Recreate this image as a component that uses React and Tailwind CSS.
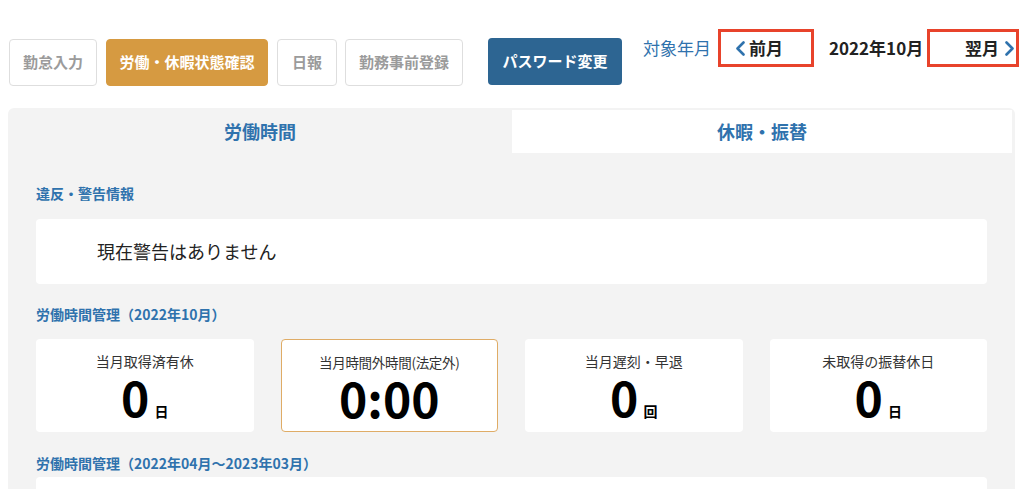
const navButtons = [
  { label: '勤怠入力', w: 'w-[88px]' },
  { label: '労働・休暇状態確認', w: 'w-[162px]', active: true },
  { label: '日報', w: 'w-[60px]' },
  { label: '勤務事前登録', w: 'w-[118px]' },
];

const stats = [
  { label: '当月取得済有休', value: '0', unit: '日' },
  { label: '当月時間外時間(法定外)', value: '0:00', highlight: true },
  { label: '当月遅刻・早退', value: '0', unit: '回' },
  { label: '未取得の振替休日', value: '0', unit: '日' },
];

function Chevron({ dir = 'left', className = '' }) {
  const points = dir === 'left' ? '8.5,1.5 2.5,7.5 8.5,13.5' : '2.5,1.5 8.5,7.5 2.5,13.5';
  return (
    <svg width="11" height="15" viewBox="0 0 11 15" className={className}>
      <polyline points={points} fill="none" stroke="currentColor" strokeWidth="2.6" strokeLinecap="round" strokeLinejoin="round" />
    </svg>
  );
}

function SectionTitle({ children, className = '' }) {
  return (
    <p className={`text-[14px] leading-[20px] font-bold text-[#2f72ad] ${className}`}>{children}</p>
  );
}

export default function App() {
  return (
    <div className="w-[1024px] h-[489px] overflow-hidden bg-white font-['Noto_Sans_CJK_JP',sans-serif]">
      <div className="flex items-start h-[108px] pl-[9px] pt-[29px]">
        <div className="flex mt-[10px]">
          {navButtons.map((b, i) => (
            <button
              key={b.label}
              className={`${b.w} h-[47px] rounded-[4px] border text-[15px] font-bold ${i > 0 ? (i === 3 ? 'ml-[8px]' : 'ml-[9px]') : ''} ${
                b.active
                  ? 'bg-[#d69a41] border-[#d69a41] text-white'
                  : 'bg-white border-[#dedede] text-[#9b9b9b]'
              }`}
            >
              {b.label}
            </button>
          ))}
          <button className="ml-[25px] -mt-[1px] w-[134px] h-[47px] rounded-[4px] bg-[#2d6592] text-white text-[15px] font-bold">
            パスワード変更
          </button>
        </div>

        <div className="flex items-center ml-[21px] h-[38px]">
          <span className="text-[17px] text-[#2f72ad] mr-[7px]">対象年月</span>
          <div className="flex items-center w-[96px] h-[38px] border-[3px] border-[#e8432b] pl-[14px]">
            <Chevron dir="left" className="text-[#2f72ad]" />
            <span className="ml-[3px] text-[17px] font-bold text-[#222]">前月</span>
          </div>
          <span className="ml-[15px] w-[98px] text-[17px] font-bold text-[#222]">2022年10月</span>
          <div className="flex items-center justify-end w-[92px] h-[38px] border-[3px] border-[#e8432b] pr-[1px]">
            <span className="text-[17px] font-bold text-[#222]">翌月</span>
            <Chevron dir="right" className="ml-[5px] text-[#2f72ad]" />
          </div>
        </div>
      </div>

      <div className="ml-[8px] w-[1007px] h-[400px] rounded-t-[6px] bg-[#f3f3f3]">
        <div className="flex h-[45px] pt-[2px] pr-[3px]">
          <div className="flex-1 flex items-center justify-center text-[18px] font-bold text-[#2f72ad]">
            労働時間
          </div>
          <div className="w-[500px] flex items-center justify-center bg-white text-[18px] font-bold text-[#2f72ad]">
            休暇・振替
          </div>
        </div>

        <div className="px-[28px]">
          <SectionTitle className="mt-[30px]">違反・警告情報</SectionTitle>
          <div className="mt-[16px] h-[65px] rounded-[4px] bg-white flex items-center pl-[61px] text-[18px] text-[#222]">
            現在警告はありません
          </div>

          <SectionTitle className="mt-[20px]">労働時間管理（2022年10月）</SectionTitle>
          <div className="mt-[15px] grid grid-cols-4 gap-[27px]">
            {stats.map((s) => (
              <div
                key={s.label}
                className={`h-[93px] rounded-[4px] bg-white flex flex-col items-center pt-[12px] ${
                  s.highlight ? 'border border-[#dfac66]' : ''
                }`}
              >
                <span className={`${s.highlight ? 'text-[13.5px] tracking-[-0.3px]' : 'text-[14px]'} leading-[20px] text-[#333]`}>
                  {s.label}
                </span>
                <div className="flex items-baseline mt-[5px]">
                  <span className="text-[48px] leading-[40px] font-bold text-black">{s.value}</span>
                  {s.unit && <span className="ml-[5px] text-[14px] leading-[20px] font-bold text-black">{s.unit}</span>}
                </div>
              </div>
            ))}
          </div>

          <SectionTitle className="mt-[21px]">労働時間管理（2022年04月〜2023年03月）</SectionTitle>
          <div className="mt-[4px] h-[60px] rounded-[4px] bg-white" />
        </div>
      </div>
    </div>
  );
}
